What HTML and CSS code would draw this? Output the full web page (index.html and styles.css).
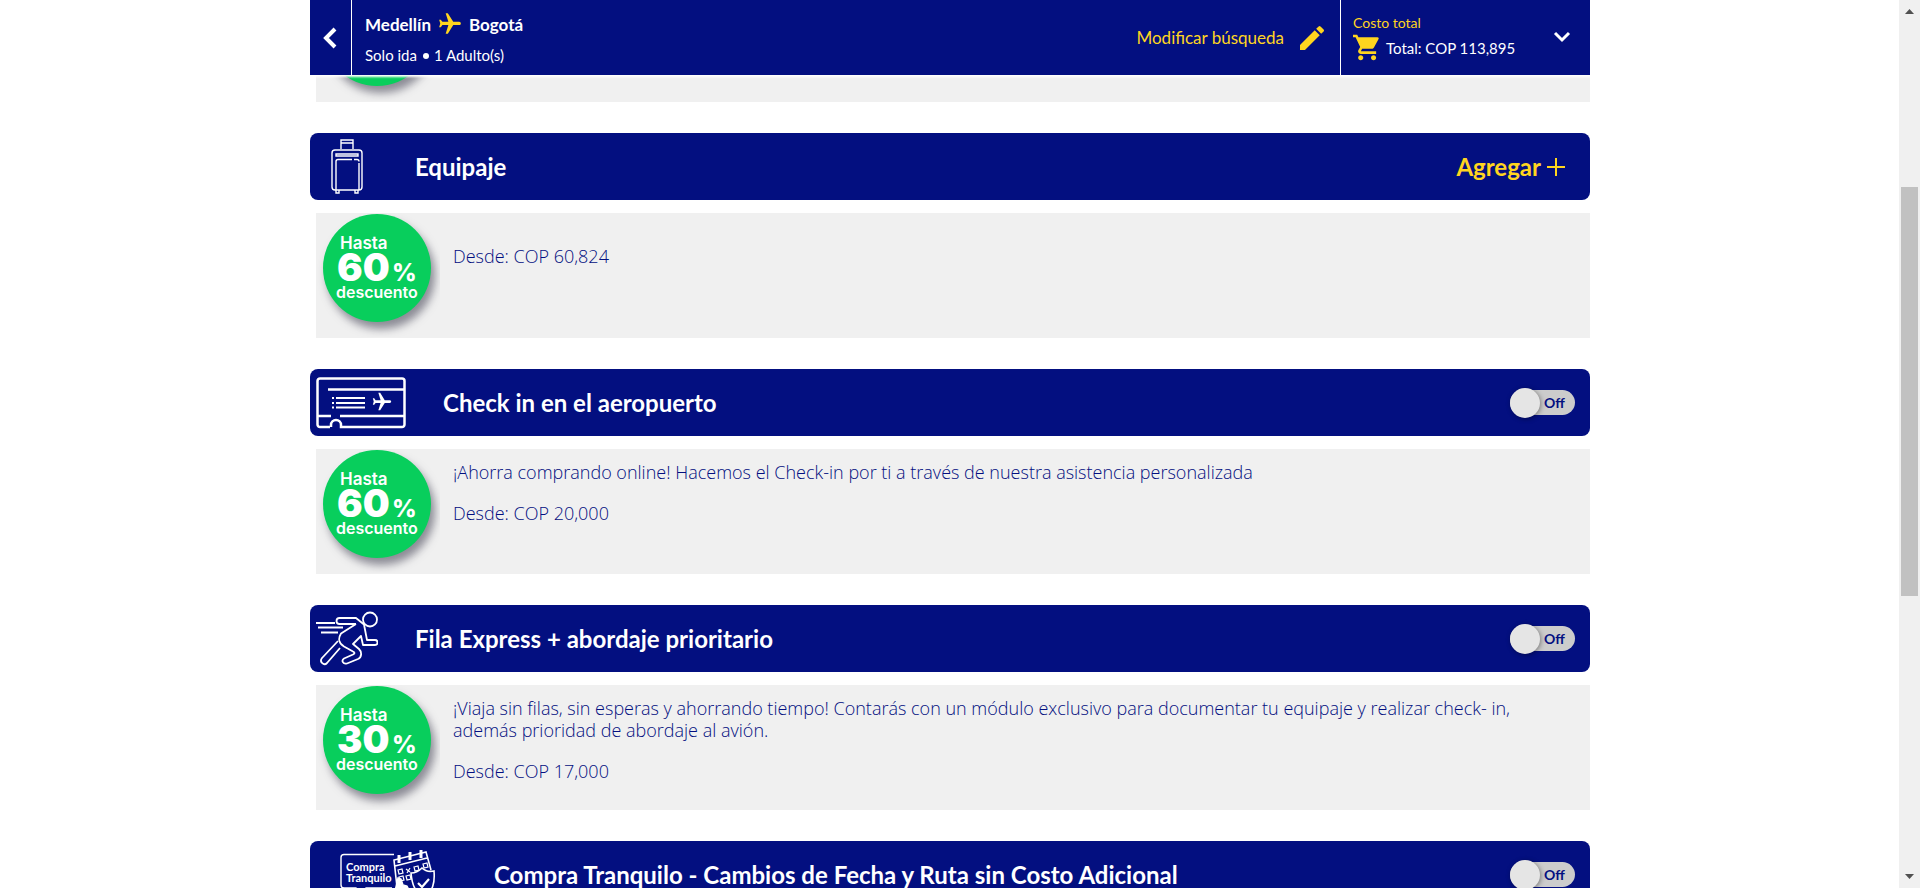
FILE: index.html
```
<!DOCTYPE html>
<html lang="es">
<head>
<meta charset="utf-8">
<title>Servicios adicionales</title>
<link rel="stylesheet" href="styles.css">
</head>
<body>
<svg class="defs" width="0" height="0" aria-hidden="true">
  <symbol id="plane" viewBox="0 0 24 24">
    <path transform="rotate(90 12 12)" d="M21 16v-2l-8-5V3.500c0-.83-.67-1.500-1.500-1.500S10 2.670 10 3.500V9l-8 5v2l8-2.500V19l-2 1.500V22l3.500-1 3.500 1v-1.500L13 19v-5.500l8 2.500z"/>
  </symbol>
</svg>
<div class="app">
  <div class="page">
    <header class="topbar">
      <button class="back" type="button" aria-label="Volver">
        <svg width="16" height="22" viewBox="0 0 16 22"><path d="M13 2 4 11l9 9" fill="none" stroke="#fff" stroke-width="4"/></svg>
      </button>
      <div class="trip">
        <div class="route"><span>Medellín</span><svg class="route-plane" width="26" height="26"><use href="#plane"/></svg><span>Bogotá</span></div>
        <div class="details"><span>Solo ida</span><span class="dot"></span><span>1 Adulto(s)</span></div>
      </div>
      <a class="modify" href="#">Modificar búsqueda
        <svg width="32" height="32" viewBox="0 0 24 24"><path fill="#ffd51f" d="M3 17.250V21h3.750L17.810 9.940l-3.750-3.750L3 17.250zM20.710 7.040a1 1 0 0 0 0-1.410l-2.340-2.340a1 1 0 0 0-1.410 0l-1.830 1.830 3.750 3.750 1.830-1.830z"/></svg>
      </a>
      <button class="cost" type="button">
        <span class="cost-text">
          <span class="cost-label">Costo total</span>
          <span class="cost-total">
            <svg width="27" height="27" viewBox="1 2 21 20"><path fill="#ffd51f" d="M7 18c-1.100 0-1.990.9-1.990 2S5.900 22 7 22s2-.9 2-2-.9-2-2-2zM1 2v2h2l3.600 7.590-1.350 2.450C4.520 15.370 5.480 17 7 17h12v-2H7.420a.25.25 0 0 1-.25-.25l.03-.12.900-1.630h7.450c.75 0 1.410-.41 1.750-1.030l3.580-6.490A1 1 0 0 0 20 4H5.210l-.94-2H1zm16 16c-1.100 0-1.990.9-1.990 2s.89 2 1.990 2 2-.9 2-2-.9-2-2-2z"/></svg>
            <span>Total: COP 113,895</span>
          </span>
        </span>
        <svg width="18" height="12" viewBox="0 0 18 12"><path d="m2 2 7 7 7-7" fill="none" stroke="#fff" stroke-width="3"/></svg>
      </button>
    </header>

    <main class="services">
      <section class="service">
        <div class="panel">
          <svg class="badge" width="124" height="124" viewBox="0 0 124 124"><circle cx="61" cy="55" r="54"/></svg>
        </div>
      </section>

      <section class="service">
        <div class="bar">
          <svg width="62" height="56" viewBox="0 0 62 56" fill="none" stroke="#fff" stroke-width="1.400">
            <path d="M25 10V1h12v9M25 4h12M19 11h24a3 3 0 0 1 3 3v34a3 3 0 0 1-3 3H19a3 3 0 0 1-3-3V14a3 3 0 0 1 3-3z"/>
            <path d="M20 15h22v2H20zM36 20.500H22a2 2 0 0 0-2 2V51M38 20.500h3a2 2 0 0 1 2 2M43 24v27M20 51v3h3v-3M39 51v3h3v-3"/>
          </svg>
          <h2>Equipaje</h2>
          <button class="add" type="button">Agregar
            <svg width="18" height="18" viewBox="0 0 18 18"><path d="M9 0v18M0 9h18" stroke="#ffd51f" stroke-width="2"/></svg>
          </button>
        </div>
        <div class="panel">
          <svg class="badge" width="124" height="124" viewBox="0 0 124 124">
            <circle cx="61" cy="55" r="54"/>
            <text class="badge-small" x="24" y="36">Hasta</text>
            <text class="badge-number" x="21" y="68">60</text>
            <text class="badge-percent" x="76" y="68">%</text>
            <text class="badge-word" x="20" y="85">descuento</text>
          </svg>
          <div class="copy copy-price"><p>Desde: COP 60,824</p></div>
        </div>
      </section>

      <section class="service">
        <div class="bar">
          <svg width="90" height="56" viewBox="0 0 90 56" fill="none" stroke="#fff" stroke-width="2.500">
            <path d="M14 52H4a2.500 2.500 0 0 1-2.500-2.500V6A2.500 2.500 0 0 1 4 3.500h82A2.500 2.500 0 0 1 88.500 6v43.500A2.500 2.500 0 0 1 86 52H25v-2a5 5 0 0 0-10 0v2"/>
            <path d="M12 14.500h76M1 41h14M24 41h64"/>
            <path stroke-width="1.800" d="M16 23h2M20 23h29M16 28h2M20 28h29M16 32.500h2M20 32.500h29"/>
            <svg x="55" y="16" width="22" height="22" fill="#fff" stroke="none"><use href="#plane"/></svg>
          </svg>
          <h2>Check in en el aeropuerto</h2>
          <label class="toggle"><input type="checkbox" role="switch"><span>Off</span></label>
        </div>
        <div class="panel">
          <svg class="badge" width="124" height="124" viewBox="0 0 124 124">
            <circle cx="61" cy="55" r="54"/>
            <text class="badge-small" x="24" y="36">Hasta</text>
            <text class="badge-number" x="21" y="68">60</text>
            <text class="badge-percent" x="76" y="68">%</text>
            <text class="badge-word" x="20" y="85">descuento</text>
          </svg>
          <div class="copy">
            <p>¡Ahorra comprando online! Hacemos el Check-in por ti a través de nuestra asistencia personalizada</p>
            <p>Desde: COP 20,000</p>
          </div>
        </div>
      </section>

      <section class="service">
        <div class="bar">
          <svg width="62" height="56" viewBox="0 0 62 56" fill="none" stroke="#fff" stroke-width="1.800" stroke-linejoin="round">
            <circle cx="54" cy="8.500" r="7"/>
            <path d="M0 12h19M2 16.500h25M5 21.500h17"/>
            <path d="M40 13H23.500a3 3 0 0 1 0-6H40l8 6.500 3 15.500h8a2.500 2.500 0 0 1 0 5H47l-2-9-8 8 6 5c3 3 3 8-1 10l-11 4.500c-4 1-6-3-3-5l9-4c2-1 2-2 0-3l-9-5c-6-4-6-8-3-13L40 13"/>
            <path d="M22 30 6 47c-3 4 2 8 5 5l13-15"/>
          </svg>
          <h2>Fila Express + abordaje prioritario</h2>
          <label class="toggle"><input type="checkbox" role="switch"><span>Off</span></label>
        </div>
        <div class="panel">
          <svg class="badge" width="124" height="124" viewBox="0 0 124 124">
            <circle cx="61" cy="55" r="54"/>
            <text class="badge-small" x="24" y="36">Hasta</text>
            <text class="badge-number" x="21" y="68">30</text>
            <text class="badge-percent" x="76" y="68">%</text>
            <text class="badge-word" x="20" y="85">descuento</text>
          </svg>
          <div class="copy">
            <p>¡Viaja sin filas, sin esperas y ahorrando tiempo! Contarás con un módulo exclusivo para documentar tu equipaje y realizar check- in, además prioridad de abordaje al avión.</p>
            <p>Desde: COP 17,000</p>
          </div>
        </div>
      </section>

      <section class="service">
        <div class="bar">
          <svg width="141" height="56" viewBox="0 0 141 56" fill="none" stroke="#fff" stroke-width="1.400">
            <path d="M78 7.500H28a3 3 0 0 0-3 3V38a3 3 0 0 0 3 3h12l6 8 4-8h26"/>
            <text class="icon-text" x="30" y="24">Compra</text>
            <text class="icon-text" x="30" y="35">Tranquilo</text>
            <path stroke-width="1.600" d="m81 40-3-27 32-8 5 18M79 19l32-8"/>
            <path stroke-width="3" d="M83 8v8M94 5v8M105 3v8"/>
            <path stroke-width="1.200" d="m82 23 4-1 1 4-4 1zM98 20l4-1 1 4-4 1zM107 17l4-1 1 4-4 1zM83 30l4-1 1 4-4 1zM90 29l4-1 1 4-4 1zM90 22l4 3M94 21l-3 5"/>
            <path fill="#030f80" stroke-width="1.600" d="M95 26c5 0 8-2 11-5 3 3 7 4 12 3 1 12-1 20-10 26-9-5-12-12-13-24z"/>
            <path stroke-width="2.200" d="m102 36 4 4 7-8"/>
            <path fill="#fff" d="m82 31 3 1 2 6 4 1 3 6-2 11H83l-4-12z"/>
          </svg>
          <h2>Compra Tranquilo - Cambios de Fecha y Ruta sin Costo Adicional</h2>
          <label class="toggle"><input type="checkbox" role="switch"><span>Off</span></label>
        </div>
      </section>
    </main>
  </div>

  <div class="scrollbar" aria-hidden="true">
    <svg width="9" height="5" viewBox="0 0 9 5"><path d="M0 5 4.500 0 9 5z" fill="#505050"/></svg>
    <div class="track"><div class="thumb"></div></div>
    <svg width="9" height="5" viewBox="0 0 9 5"><path d="m0 0 4.500 5L9 0z" fill="#505050"/></svg>
  </div>
</div>
</body>
</html>
```
FILE: styles.css
```
:root {
  --navy: #030f80;
  --yellow: #ffd51f;
  --panel: #f0f0f0;
}

* { box-sizing: border-box; }

body {
  margin: 0;
  background: #fff;
  color: var(--navy);
  font-family: Lato, "Open Sans", sans-serif;
}

button {
  border: 0;
  padding: 0;
  background: none;
  color: inherit;
  font: inherit;
  cursor: pointer;
}

svg { flex: none; display: block; }

.defs { position: absolute; }

.app {
  display: flex;
  height: 100vh;
  overflow: hidden;
}

.page {
  flex: 1;
  min-width: 0;
  padding-left: 1px;
  overflow: hidden;
}

.topbar,
.services {
  width: 100%;
  max-width: 1280px;
  margin: 0 auto;
}

/* Top bar */
.topbar {
  position: relative;
  z-index: 1;
  display: flex;
  height: 75px;
  background: var(--navy);
  color: #fff;
  box-shadow: 0 1px 2px 1px #fff;
}

.back {
  display: flex;
  align-items: center;
  justify-content: center;
  width: 42px;
  padding-right: 2px;
  border-right: 1px solid #fff;
}

.trip {
  flex: 1;
  padding: 11px 13px;
}

.route {
  display: flex;
  align-items: center;
  height: 26px;
  font-size: 17px;
  font-weight: 700;
}

.route-plane {
  margin: 0 6px;
  fill: var(--yellow);
}

.details {
  display: flex;
  align-items: center;
  margin-top: 8px;
  font-size: 15px;
  line-height: 20px;
}

.dot {
  width: 6px;
  height: 6px;
  margin: 2px 5px 0 6px;
  border-radius: 50%;
  background: #fff;
}

.modify {
  display: flex;
  align-items: center;
  gap: 12px;
  padding-right: 12px;
  color: var(--yellow);
  font-size: 17px;
  text-decoration: none;
}

.cost {
  display: flex;
  align-items: center;
  justify-content: space-between;
  width: 250px;
  padding: 0 19px 2px 12px;
  border-left: 1px solid #fff;
  text-align: left;
}

.cost-text {
  display: flex;
  flex-direction: column;
}

.cost-label {
  color: var(--yellow);
  font-size: 14px;
  line-height: 22px;
}

.cost-total {
  display: flex;
  align-items: center;
  gap: 6px;
  font-size: 15px;
}

/* The list is scrolled so that the first panel is mostly under the top bar */
.services {
  display: flex;
  flex-direction: column;
  gap: 31px;
  margin-top: -98px;
}

.bar {
  display: flex;
  align-items: center;
  height: 67px;
  margin-bottom: 13px;
  padding: 0 15px 0 6px;
  border-radius: 8px;
  background: var(--navy);
  color: #fff;
}

.bar h2 {
  flex: 1;
  margin: 0 0 0 37px;
  font-size: 24px;
  font-weight: 700;
  line-height: 30px;
}

.add {
  display: flex;
  align-items: center;
  gap: 6px;
  margin-right: 10px;
  color: var(--yellow);
  font-size: 24px;
  font-weight: 700;
}

.toggle {
  display: flex;
  align-items: center;
  gap: 4px;
  width: 65px;
  height: 25px;
  border-radius: 13px;
  background: #ccc;
  color: var(--navy);
  font-size: 14px;
  font-weight: 700;
  cursor: pointer;
}

.toggle input {
  flex: none;
  width: 30px;
  height: 30px;
  margin: 0;
  border-radius: 50%;
  background: #e5e5e5;
  box-shadow: 1px 1px 5px rgba(0, 0, 0, 0.4);
  appearance: none;
}

.panel {
  display: flex;
  min-height: 125px;
  margin-left: 6px;
  padding-right: 60px;
  background: var(--panel);
}

.badge {
  font-family: Inter, sans-serif;
}

.badge circle {
  fill: #08ce5c;
  filter: drop-shadow(4px 7px 4px rgba(40, 40, 60, 0.5));
}

.badge text { fill: #fff; }

.badge-small { font-size: 17px; font-weight: 600; }
.badge-number { font-size: 38px; font-weight: 900; }
.badge-percent { font-size: 24px; font-weight: 800; }
.badge-word { font-size: 16px; font-weight: 600; }

.icon-text {
  fill: #fff;
  stroke: none;
  font-size: 11px;
  font-weight: 700;
}

.copy {
  flex: 1;
  padding: 12px 0 0 13px;
  font-family: "Open Sans", sans-serif;
  font-size: 18px;
  font-weight: 300;
  line-height: 22px;
}

.copy-price { padding-top: 32px; }

.copy p { margin: 0 0 19px; }

/* Scrollbar */
.scrollbar {
  display: flex;
  flex-direction: column;
  align-items: center;
  width: 21px;
  padding: 9px 0;
  background: var(--panel);
}

.track {
  flex: 1;
  display: grid;
  grid-template-rows: 173fr 409fr 278fr;
  width: 17px;
}

.thumb {
  grid-row: 2;
  background: #c1c1c1;
}
```
